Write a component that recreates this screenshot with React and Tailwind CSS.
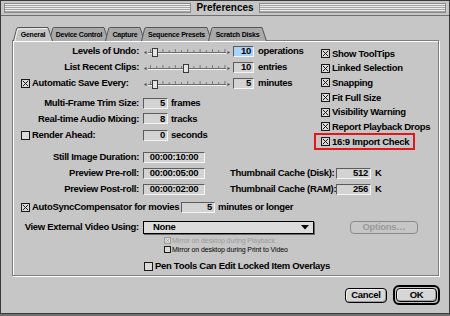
import React from 'react';

const txt = "text-[9.5px] font-bold tracking-[-0.3px] leading-none whitespace-nowrap";

function Check({ on, dim, small }) {
  return (
    <span
      className={`${small ? 'w-[7px] h-[7px]' : 'w-[9px] h-[9px]'} shrink-0 flex border ${dim ? 'border-[#9c9c9c]' : 'border-[#1a1a1a]'} bg-[#dadada]`}
    >
      {on && (
        <svg viewBox="0 0 8 8" className="w-full h-full">
          <path d="M1 1L7 7M7 1L1 7" stroke={dim ? '#9c9c9c' : '#111'} strokeWidth="1.1" />
        </svg>
      )}
    </span>
  );
}

function Field({ children, className = '', blue, center }) {
  return (
    <span
      className={`h-[11px] flex items-center ${center ? 'justify-center' : 'justify-end pr-[2px]'} border border-t-[#5c5c5c] border-l-[#5c5c5c] border-b-[#f4f4f4] border-r-[#f4f4f4] ${blue ? 'bg-[#a9d3ff]' : 'bg-[#d3d3d3]'} ${txt} ${className}`}
    >
      {children}
    </span>
  );
}

function Slider({ at }) {
  const ticks = Array.from({ length: 13 }, (_, i) => 7.5 + i * 6.2);
  return (
    <svg width="88" height="12" className="block shrink-0">
      <path d="M1 7.5L3.5 6V9Z" fill="#444" />
      <line x1="5" y1="7.5" x2="83" y2="7.5" stroke="#6b6b6b" />
      <line x1="5" y1="8.5" x2="83" y2="8.5" stroke="#f2f2f2" />
      {ticks.map((x, i) => (
        <line key={i} x1={x} y1={i % 2 ? 5 : 4} x2={x} y2="7" stroke="#7a7a7a" />
      ))}
      <path d="M87 7.5L84.5 6V9Z" fill="#444" />
      <rect x={at + 0.5} y="3.5" width="5" height="8" fill="#e4e4e4" stroke="#3a3a3a" />
    </svg>
  );
}

function Row({ lbl, check, children, className = '' }) {
  return (
    <div className={`flex items-center h-[16px] ${className}`}>
      <div className={`w-[126px] flex items-center ${check ? 'justify-start pl-[8px] gap-[2px]' : 'justify-end'} ${txt}`}>
        {check && <Check on={check === 'on'} />}
        <span>{lbl}</span>
      </div>
      <div className="ml-[4px] flex items-center">{children}</div>
    </div>
  );
}

function Tab({ label, w, selected }) {
  const h = 14;
  return (
    <div className={`relative -mr-[4px] ${selected ? 'z-10' : ''}`}>
      <svg width={w} height={h} className="block">
        <path
          d={`M0.5 ${h} L3.6 1.8 Q4 0.5 5.2 0.5 L${w - 5} 0.5 L${w - 0.5} ${h}`}
          fill={selected ? '#c6c6c6' : '#a9a9a9'}
          stroke="#555"
        />
        {selected && <path d={`M1.8 ${h} L4.7 2.2 L${w - 6} 1.5`} fill="none" stroke="#f2f2f2" />}
      </svg>
      <span className="absolute inset-0 pt-[1px] flex items-center justify-center text-[7px] font-bold tracking-[-0.2px] leading-none whitespace-nowrap">
        {label}
      </span>
    </div>
  );
}

function Opt({ children }) {
  return (
    <div className="flex items-center h-[15px] gap-[2px]">
      <Check on />
      <span className={txt}>{children}</span>
    </div>
  );
}

const stripes =
  "flex-1 h-[10px] border border-[#8a8a8a] bg-[repeating-linear-gradient(to_bottom,#ececec_0px,#ececec_1px,#a4a4a4_1px,#a4a4a4_2px)]";

export default function App() {
  return (
    <div className="w-[450px] h-[316px] bg-[#6f6f6f] font-['Liberation_Sans',Arial,sans-serif] text-black">
      <div className="w-[450px] h-[314px] flex flex-col bg-[#c6c6c6] border border-[#3a3a3a]">
        {/* title bar */}
        <div className="h-[15px] shrink-0 flex items-center px-[3px] border-b border-[#707070]">
          <div className={stripes} />
          <div className="px-[5px] text-[10px] font-bold leading-none">Preferences</div>
          <div className={stripes} />
        </div>

        <div className="pl-[11px] pt-[11px]">
          {/* tabs */}
          <div className="flex -mb-[1px] ml-[1px]">
            <Tab label="General" w={40} selected />
            <Tab label="Device Control" w={60} />
            <Tab label="Capture" w={40} />
            <Tab label="Sequence Presets" w={71} />
            <Tab label="Scratch Disks" w={59} />
          </div>

          {/* panel */}
          <div className="w-[427px] h-[236px] border border-[#7d7d7d] shadow-[inset_1px_1px_0_#fff,1px_1px_0_#fff] pt-[2px]">
            <div className="flex h-[106px]">
              <div className="w-[308px] flex flex-col">
                <Row lbl="Levels of Undo:">
                  <Slider at={9} />
                  <Field blue className="w-[21px] ml-[2px]">10</Field>
                  <span className={`${txt} ml-[4px]`}>operations</span>
                </Row>
                <Row lbl="List Recent Clips:">
                  <Slider at={40} />
                  <Field className="w-[21px] ml-[2px]">10</Field>
                  <span className={`${txt} ml-[4px]`}>entries</span>
                </Row>
                <Row lbl="Automatic Save Every:" check="on">
                  <Slider at={9} />
                  <Field className="w-[21px] ml-[2px]">5</Field>
                  <span className={`${txt} ml-[4px]`}>minutes</span>
                </Row>
                <Row lbl="Multi-Frame Trim Size:" className="mt-[4px]">
                  <Field className="w-[25px]">5</Field>
                  <span className={`${txt} ml-[3px]`}>frames</span>
                </Row>
                <Row lbl="Real-time Audio Mixing:" className="!h-[15px]">
                  <Field className="w-[25px]">8</Field>
                  <span className={`${txt} ml-[3px]`}>tracks</span>
                </Row>
                <Row lbl="Render Ahead:" check="off" className="mt-[1px]">
                  <Field className="w-[25px]">0</Field>
                  <span className={`${txt} ml-[3px]`}>seconds</span>
                </Row>
              </div>
              <div className="flex flex-col pt-[3px]">
                <Opt>Show ToolTips</Opt>
                <Opt>Linked Selection</Opt>
                <Opt>Snapping</Opt>
                <Opt>Fit Full Size</Opt>
                <Opt>Visibility Warning</Opt>
                <Opt>Report Playback Drops</Opt>
                <div className="relative">
                  <Opt>16:9 Import Check</Opt>
                  <div className="absolute -left-[7px] -top-[1px] w-[101px] h-[17px] border-2 border-[#e3161c]" />
                </div>
              </div>
            </div>

            <Row lbl="Still Image Duration:">
              <Field center className="w-[62px]">00:00:10:00</Field>
            </Row>
            <Row lbl="Preview Pre-roll:">
              <Field center className="w-[62px]">00:00:05:00</Field>
              <span className={`${txt} w-[103px] ml-[25px] text-right`}>Thumbnail Cache (Disk):</span>
              <Field className="w-[35px] ml-[3px]">512</Field>
              <span className={`${txt} ml-[4px]`}>K</span>
            </Row>
            <Row lbl="Preview Post-roll:">
              <Field center className="w-[62px]">00:00:02:00</Field>
              <span className={`${txt} w-[103px] ml-[25px] text-right`}>Thumbnail Cache (RAM):</span>
              <Field className="w-[35px] ml-[3px]">256</Field>
              <span className={`${txt} ml-[4px]`}>K</span>
            </Row>

            <div className="flex items-center h-[16px] mt-[2px] pl-[8px]">
              <Check on />
              <span className={`${txt} w-[149px] ml-[2px]`}>AutoSyncCompensator for movies</span>
              <Field className="w-[34px]">5</Field>
              <span className={`${txt} ml-[3px]`}>minutes or longer</span>
            </div>

            <Row lbl="View External Video Using:" className="mt-[4px]">
              <div className="w-[171px] h-[13px] flex items-center pl-[9px] pr-[4px] border border-black bg-[#dcdcdc] shadow-[1px_1px_0_#6a6a6a]">
                <span className={txt}>None</span>
                <svg width="8" height="5" className="ml-auto">
                  <path d="M0 0H8L4 4.5Z" fill="#000" />
                </svg>
              </div>
              <div className="ml-[36px] w-[68px] h-[13px] flex items-center justify-center rounded-[4px] border border-[#8a8a8a] text-[#9a9a9a] text-[9.5px] font-bold tracking-[-0.3px] leading-none">
                Options…
              </div>
            </Row>

            <div className="mt-[1px] ml-[151px] flex flex-col">
              <div className="h-[9px] flex items-center gap-[1px]">
                <Check on dim small />
                <span className="text-[7px] tracking-[-0.1px] leading-none text-[#9c9c9c] whitespace-nowrap">
                  Mirror on desktop during Playback
                </span>
              </div>
              <div className="h-[9px] flex items-center gap-[1px]">
                <Check small />
                <span className="text-[7px] tracking-[-0.1px] leading-none whitespace-nowrap">
                  Mirror on desktop during Print to Video
                </span>
              </div>
            </div>

            <div className="mt-[4px] ml-[131px] h-[16px] flex items-center gap-[2px]">
              <Check />
              <span className={txt}>Pen Tools Can Edit Locked Item Overlays</span>
            </div>
          </div>

          {/* buttons */}
          <div className="mt-[9px] pr-[9px] flex items-center justify-end gap-[6px]">
            <div className="w-[42px] h-[15px] flex items-center justify-center rounded-[4px] border border-black bg-[#d6d6d6] shadow-[inset_1px_1px_0_#f2f2f2,inset_-1px_-1px_0_#9a9a9a]">
              <span className={txt}>Cancel</span>
            </div>
            <div className="w-[47px] h-[20px] rounded-[6px] border-[2px] border-black p-[1px]">
              <div className="w-full h-full flex items-center justify-center rounded-[4px] border border-black bg-[#d6d6d6] shadow-[inset_1px_1px_0_#f2f2f2,inset_-1px_-1px_0_#9a9a9a]">
                <span className={txt}>OK</span>
              </div>
            </div>
          </div>
        </div>
      </div>
    </div>
  );
}
